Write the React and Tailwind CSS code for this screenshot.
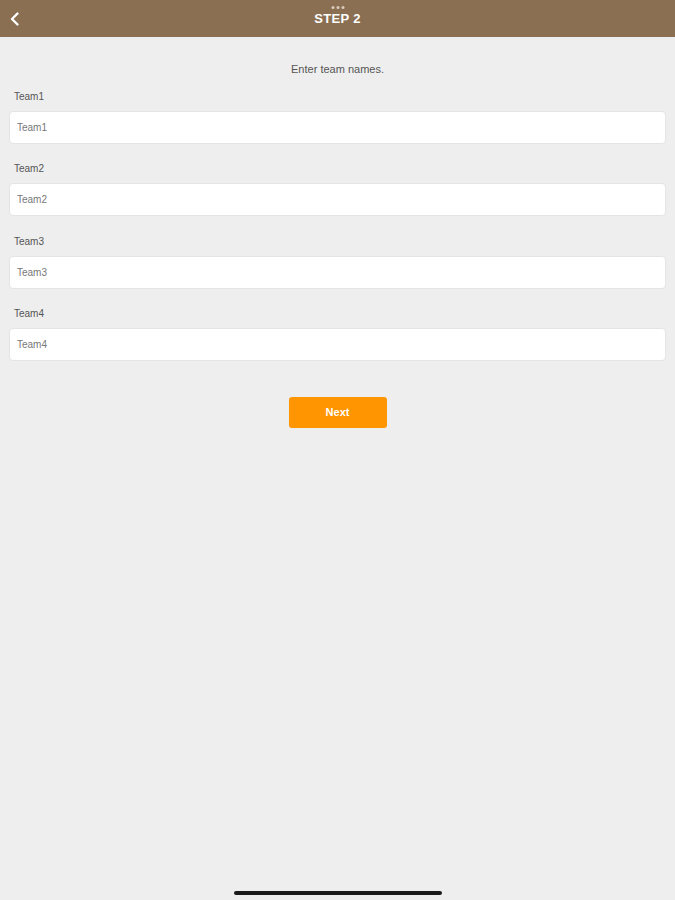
import { useState } from 'react';

const teams = ['Team1', 'Team2', 'Team3', 'Team4'];

const App = () => {
  const [names, setNames] = useState(['', '', '', '']);

  return (
    <div className="relative h-[900px] w-[675px] bg-[#eeeeee] font-['Liberation_Sans',sans-serif] overflow-hidden">
      {/* Header */}
      <div className="relative flex h-[37px] items-center justify-center bg-[#8b6f53]">
        <div className="absolute top-[6px] left-1/2 flex -translate-x-1/2 gap-[2px]">
          <span className="h-[3px] w-[3px] rounded-full bg-[#d9cbbb]" />
          <span className="h-[3px] w-[3px] rounded-full bg-[#d9cbbb]" />
          <span className="h-[3px] w-[3px] rounded-full bg-[#d9cbbb]" />
        </div>
        <button className="absolute left-[9px] top-[11px] text-white">
          <svg width="12" height="16" viewBox="0 0 12 16" fill="none">
            <path d="M8.5 2.5L3 8l5.5 5.5" stroke="white" strokeWidth="2.4" strokeLinecap="round" strokeLinejoin="round" />
          </svg>
        </button>
        <h1 className="mt-[1px] text-[13px] font-bold tracking-wide text-white">STEP 2</h1>
      </div>

      {/* Form */}
      <div className="px-[9px] pt-[24px]">
        <p className="text-center text-[11px] text-[#555555]">Enter team names.</p>
        <div className="mt-[13px] flex flex-col gap-[19.5px]">
          {teams.map((t, i) => (
            <div key={t}>
              <label className="block pl-[5px] text-[10px] leading-[12px] text-[#555555]">{t}</label>
              <input
                value={names[i]}
                onChange={(e) => {
                  const next = [...names];
                  next[i] = e.target.value;
                  setNames(next);
                }}
                placeholder={t}
                className="mt-[8px] h-[33px] w-full rounded-[4px] border border-[#e4e4e4] bg-white px-[7px] text-[10px] text-[#333] placeholder:text-[#777777] focus:outline-none"
              />
            </div>
          ))}
        </div>
        <div className="mt-[36px] flex justify-center">
          <button className="h-[31px] w-[98px] rounded-[3px] bg-[#ff9500] text-[11px] font-bold text-white">
            Next
          </button>
        </div>
      </div>

      {/* Home indicator */}
      <div className="absolute bottom-[5px] left-[234px] h-[4px] w-[208px] rounded-full bg-[#1a1a1a]" />
    </div>
  );
};

export default App;
